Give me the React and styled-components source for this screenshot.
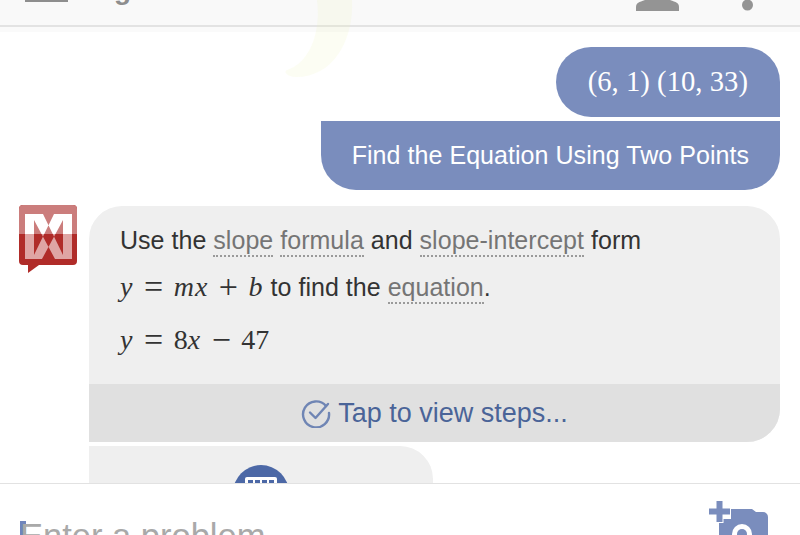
import React from "react";
import styled, { createGlobalStyle } from "styled-components";

const GlobalStyle = createGlobalStyle`
  html, body {
    margin: 0;
    padding: 0;
    background: #ffffff;
  }
`;

const Page = styled.div`
  position: relative;
  width: 800px;
  height: 535px;
  overflow: hidden;
  display: flex;
  flex-direction: column;
  background: #ffffff;
  font-family: "Liberation Sans", Arial, sans-serif;
`;

const Header = styled.header`
  flex: 0 0 27px;
  box-sizing: border-box;
  display: flex;
  align-items: flex-start;
  overflow: hidden;
  background: #f9f9f9;
  border-bottom: 2px solid #e3e3e3;
`;

const HeaderShade = styled.div`
  flex: 0 0 5px;
  background: #fafafa;
`;

const MenuBar = styled.div`
  flex: 0 0 43px;
  height: 2px;
  margin-left: 25px;
  background: #8e8e8e;
`;

const Title = styled.div`
  margin: -26px 0 0 18px;
  font-size: 28px;
  line-height: 32px;
  font-weight: 700;
  color: #8e8e8e;
`;

const HeaderIcons = styled.div`
  margin-left: auto;
  display: flex;
  align-items: flex-start;
  gap: 63px;
  padding-right: 47px;
`;

const Crescent = styled.svg`
  position: absolute;
  left: 283px;
  top: 0;
  pointer-events: none;
`;

const Chat = styled.main`
  flex: 1;
  min-height: 0;
  overflow: hidden;
  display: flex;
  flex-direction: column;
  padding: 15px 20px 0 19px;
`;

const UserBubble = styled.div`
  flex: 0 0 ${(p) => p.$height}px;
  align-self: flex-end;
  box-sizing: border-box;
  margin-bottom: 4px;
  padding: 0 ${(p) => p.$pad}px;
  display: flex;
  align-items: center;
  color: #ffffff;
  background: #7a8dbd;
  border-radius: ${(p) => p.$radius};
  font-size: 25px;
  letter-spacing: 0.05px;
`;

const MathText = styled.span`
  font-family: "Liberation Serif", "Times New Roman", serif;
  font-size: ${(p) => p.$size || 28}px;
  line-height: 0;
  white-space: pre;
  color: ${(p) => p.$color || "inherit"};
`;

const Var = styled.i`
  font-style: italic;
  letter-spacing: 1px;
`;

const Op = styled.span`
  margin: 0 10.5px;
  font-size: 34px;
  line-height: 0;
  vertical-align: -2px;
`;

const BotRow = styled.section`
  flex: 0 0 auto;
  display: flex;
  align-items: flex-start;
  gap: 12px;
  margin-top: 12px;
`;

const Avatar = styled.svg`
  flex: 0 0 58px;
  margin-top: -1px;
`;

const BotColumn = styled.div`
  flex: 1;
  min-width: 0;
  display: flex;
  flex-direction: column;
  gap: 4px;
`;

const AnswerCard = styled.article`
  height: 236px;
  display: flex;
  flex-direction: column;
  overflow: hidden;
  background: #efefef;
  border-radius: 33px 33px 33px 0;
`;

const AnswerBody = styled.div`
  flex: 1;
  padding: 16px 0 0 31px;
`;

const AnswerLine = styled.div`
  height: ${(p) => p.$height}px;
  line-height: ${(p) => p.$height}px;
  font-size: 25px;
  letter-spacing: 0.03px;
  color: #333333;
  white-space: pre;
`;

const Term = styled.span`
  color: #757575;
  padding-bottom: 1px;
  border-bottom: 2px dotted #9a9a9a;
`;

const StepsBar = styled.div`
  flex: 0 0 58px;
  display: flex;
  align-items: center;
  justify-content: center;
  gap: 7px;
  background: #e0e0e0;
  color: #4a6498;
  font-size: 27px;
`;

const KeyboardCard = styled.article`
  width: 344px;
  height: 60px;
  display: flex;
  justify-content: center;
  padding-top: 19px;
  box-sizing: border-box;
  background: #efefef;
  border-radius: 0 33px 0 0;
`;

const KeyboardBadge = styled.div`
  width: 56px;
  height: 56px;
  display: flex;
  justify-content: center;
  padding-top: 12px;
  box-sizing: border-box;
  border-radius: 50%;
  background: #4c68a6;
`;

const KeyboardKeys = styled.div`
  width: 32px;
  height: 22px;
  box-sizing: border-box;
  padding: 3px;
  display: flex;
  justify-content: space-between;
  align-items: flex-start;
  background: #ffffff;
  border-radius: 2px;
`;

const Key = styled.span`
  width: 5px;
  height: 3px;
  background: #4c68a6;
`;

const Footer = styled.footer`
  position: relative;
  flex: 0 0 52px;
  box-sizing: border-box;
  overflow: hidden;
  display: flex;
  align-items: flex-start;
  padding: 33px 31px 0 20px;
  background: #ffffff;
  border-top: 1px solid #e2e2e2;
`;

const Cursor = styled.span`
  flex: 0 0 6px;
  height: 30px;
  margin: 4px -6px 0 0;
  background: #6f85bc;
`;

const Placeholder = styled.div`
  font-size: 34.5px;
  line-height: 38px;
  color: #a9a9a9;
  white-space: nowrap;
`;

const CameraIcon = styled.svg`
  margin: -16px 0 0 auto;
`;

const Logo = () => (
  <Avatar width="58" height="68" viewBox="0 0 58 68">
    <defs>
      <clipPath id="logoTop">
        <rect x="0" y="0" width="58" height="29" />
      </clipPath>
      <clipPath id="logoBottom">
        <rect x="0" y="29" width="58" height="39" />
      </clipPath>
    </defs>
    <path d="M4 0H54a4 4 0 0 1 4 4V56a4 4 0 0 1-4 4H20L9 68 9 60H4a4 4 0 0 1-4-4V4a4 4 0 0 1 4-4z" fill="#b02c29" />
    <path d="M4 0H54a4 4 0 0 1 4 4V29H0V4a4 4 0 0 1 4-4z" fill="#cb7d7c" />
    <g clipPath="url(#logoTop)">
      <path d="M6 9H15V54H6zM44 9H53V54H44z" fill="#ffffff" />
      <path d="M15 9H24L44 50V54H36L15 15zM44 9H35L15 50V54H23L44 15z" fill="#ffffff" />
    </g>
    <g clipPath="url(#logoBottom)">
      <path d="M6 9H15V54H6zM44 9H53V54H44z" fill="#dfa5a4" />
      <path d="M15 9H24L44 50V54H36L15 15zM44 9H35L15 50V54H23L44 15z" fill="#dfa5a4" />
    </g>
  </Avatar>
);

export default function App() {
  return (
    <Page>
      <GlobalStyle />
      <Header>
        <MenuBar />
        <Title>Algebra</Title>
        <HeaderIcons>
          <svg width="43" height="11" viewBox="0 0 43 11">
            <path d="M0 11V7C0 3 3 2 9 0H34C40 2 43 3 43 7V11z" fill="#949494" />
          </svg>
          <svg width="11" height="11" viewBox="0 0 11 11">
            <circle cx="5.5" cy="5" r="5.5" fill="#949494" />
          </svg>
        </HeaderIcons>
      </Header>
      <HeaderShade />
      <Chat>
        <UserBubble $height={70} $pad={32} $radius="35px 35px 0 35px">
          <MathText $size={28.6}>(6, 1) (10, 33)</MathText>
        </UserBubble>
        <UserBubble $height={69} $pad={31} $radius="0 0 35px 35px">
          Find the Equation Using Two Points
        </UserBubble>
        <BotRow>
          <Logo />
          <BotColumn>
            <AnswerCard>
              <AnswerBody>
                <AnswerLine $height={37}>
                  Use the <Term>slope</Term> <Term>formula</Term> and{" "}
                  <Term>slope-intercept</Term> form
                </AnswerLine>
                <AnswerLine $height={56}>
                  <MathText $color="#333333">
                    <Var>y</Var>
                    <Op>=</Op>
                    <Var>mx</Var>
                    <Op>+</Op>
                    <Var>b</Var>
                  </MathText>{" "}
                  to find the <Term>equation</Term>.
                </AnswerLine>
                <AnswerLine $height={50}>
                  <MathText $color="#333333">
                    <Var>y</Var>
                    <Op>=</Op>8<Var>x</Var>
                    <Op>−</Op>47
                  </MathText>
                </AnswerLine>
              </AnswerBody>
              <StepsBar>
                <svg width="30" height="30" viewBox="0 0 30 30" fill="none" stroke="#6f85b4" strokeWidth="2.4" strokeLinecap="round" strokeLinejoin="round">
                  <path d="M25 8A13 13 0 1 0 28 15" />
                  <path d="M9 14.5 14.5 20 27 6" />
                </svg>
                Tap to view steps...
              </StepsBar>
            </AnswerCard>
            <KeyboardCard>
              <KeyboardBadge>
                <KeyboardKeys>
                  <Key />
                  <Key />
                  <Key />
                  <Key />
                </KeyboardKeys>
              </KeyboardBadge>
            </KeyboardCard>
          </BotColumn>
        </BotRow>
      </Chat>
      <Footer>
        <Cursor />
        <Placeholder>Enter a problem</Placeholder>
        <CameraIcon width="60" height="34" viewBox="0 0 60 34">
          <path d="M10 34V18H22V8H43L47 11H54a5 5 0 0 1 5 5V34z" fill="#7a8dbd" />
          <circle cx="33" cy="33" r="10" fill="#ffffff" />
          <circle cx="33" cy="33" r="5" fill="#7a8dbd" />
          <path d="M7.5 0H13.5V7.5H21V13.5H13.5V21H7.5V13.5H0V7.5H7.5z" fill="#7a8dbd" stroke="#ffffff" strokeWidth="2" paintOrder="stroke" />
        </CameraIcon>
      </Footer>
      <Crescent width="70" height="78" viewBox="0 0 70 78">
        <path d="M34 0H69C71 40 50 78 12 77 4 76 0 72 4 70 28 62 38 30 34 0z" fill="#eef3b4" fillOpacity="0.16" />
      </Crescent>
    </Page>
  );
}
